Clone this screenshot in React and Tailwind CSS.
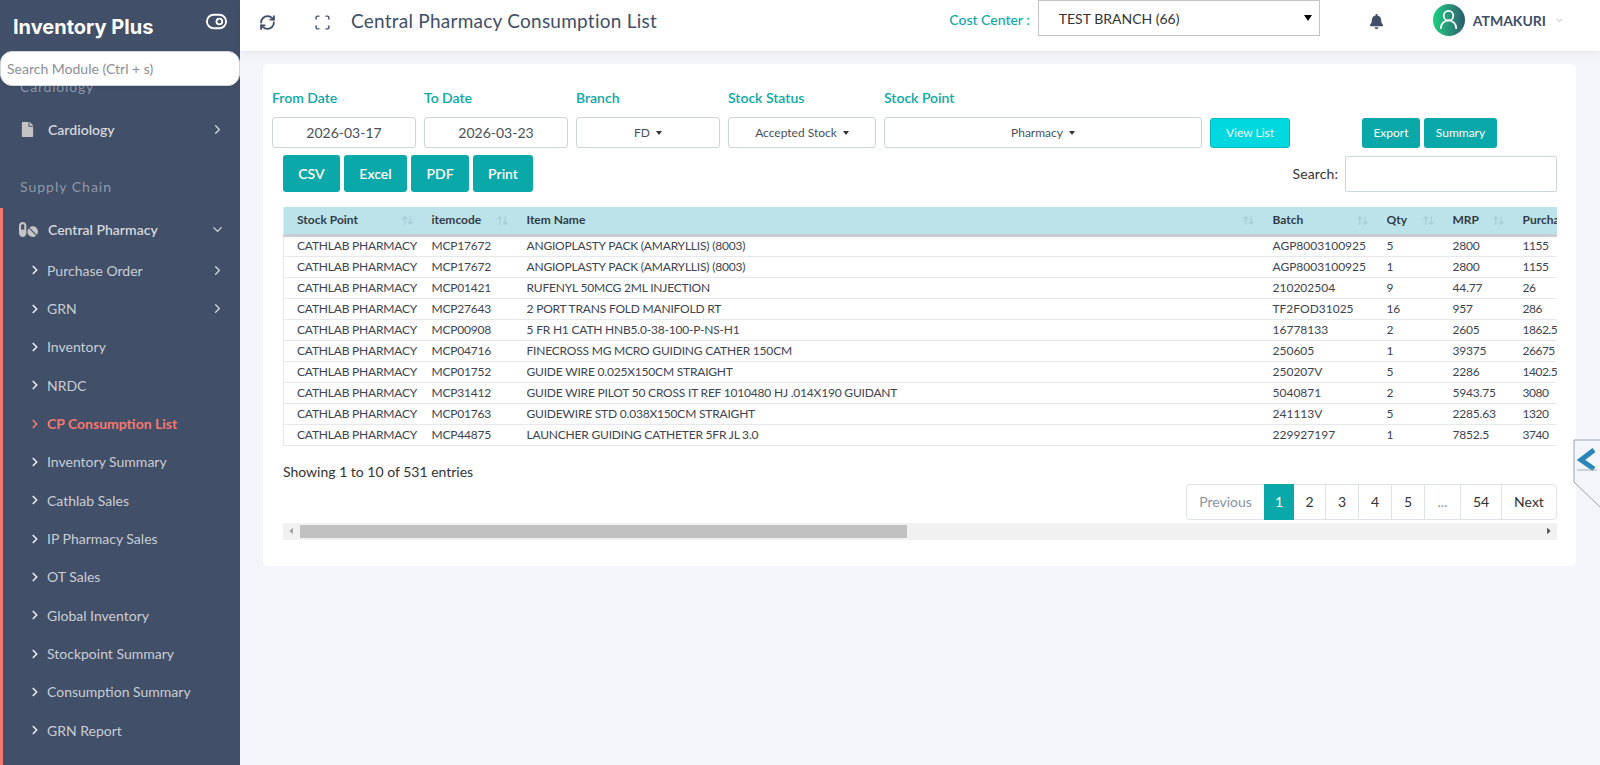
import { ChevronRight, ChevronDown, ToggleRight, UserRound, RefreshCw, Scan } from "lucide-react";
import { FaFile, FaPills, FaBell, FaCaretLeft, FaCaretRight } from "react-icons/fa";
import { TbArrowsSort } from "react-icons/tb";

const subMenu = [
  { name: "Purchase Order", arrow: true },
  { name: "GRN", arrow: true },
  { name: "Inventory" },
  { name: "NRDC" },
  { name: "CP Consumption List", active: true },
  { name: "Inventory Summary" },
  { name: "Cathlab Sales" },
  { name: "IP Pharmacy Sales" },
  { name: "OT Sales" },
  { name: "Global Inventory" },
  { name: "Stockpoint Summary" },
  { name: "Consumption Summary" },
  { name: "GRN Report" },
];

const rows = [
  ["MCP17672", "ANGIOPLASTY PACK (AMARYLLIS) (8003)", "AGP8003100925", "5", "2800", "1155"],
  ["MCP17672", "ANGIOPLASTY PACK (AMARYLLIS) (8003)", "AGP8003100925", "1", "2800", "1155"],
  ["MCP01421", "RUFENYL 50MCG 2ML INJECTION", "210202504", "9", "44.77", "26"],
  ["MCP27643", "2 PORT TRANS FOLD MANIFOLD RT", "TF2FOD31025", "16", "957", "286"],
  ["MCP00908", "5 FR H1 CATH HNB5.0-38-100-P-NS-H1", "16778133", "2", "2605", "1862.58"],
  ["MCP04716", "FINECROSS MG MCRO GUIDING CATHER 150CM", "250605", "1", "39375", "26675"],
  ["MCP01752", "GUIDE WIRE 0.025X150CM STRAIGHT", "250207V", "5", "2286", "1402.5"],
  ["MCP31412", "GUIDE WIRE PILOT 50 CROSS IT REF 1010480 HJ .014X190 GUIDANT", "5040871", "2", "5943.75", "3080"],
  ["MCP01763", "GUIDEWIRE STD 0.038X150CM STRAIGHT", "241113V", "5", "2285.63", "1320"],
  ["MCP44875", "LAUNCHER GUIDING CATHETER 5FR JL 3.0", "229927197", "1", "7852.5", "3740"],
];

const columns = [
  { name: "Stock Point", w: "w-[135px]" },
  { name: "itemcode", w: "w-[95px]" },
  { name: "Item Name", w: "w-[746px]" },
  { name: "Batch", w: "w-[114px]" },
  { name: "Qty", w: "w-[66px]" },
  { name: "MRP", w: "w-[70px]" },
  { name: "Purchase Rate", w: "w-[120px]" },
];

const pages = [
  { t: "2", w: "w-[32px]" },
  { t: "3", w: "w-[33px]" },
  { t: "4", w: "w-[33px]" },
  { t: "5", w: "w-[33px]" },
  { t: "...", w: "w-[36px]", muted: true },
  { t: "54", w: "w-[41px]" },
];

function Sidebar() {
  return (
    <aside className="w-[240px] h-screen shrink-0 bg-[#414f68] overflow-hidden relative">
      <div className="h-[51px] flex items-start justify-between pl-[13px] pr-[12px] pt-[12px]">
        <span className="text-white text-[20px] leading-[30px] font-bold font-['Inter',sans-serif]">Inventory Plus</span>
        <ToggleRight className="text-white w-[23px] h-[23px] -mt-[2px]" strokeWidth={2} />
      </div>
      <div className="h-[35px] relative z-10 bg-white rounded-xl border border-gray-300 flex items-center pl-[6px] text-[14px] text-[#8a8f98] shadow-sm">
        Search Module (Ctrl + s)
      </div>
      <div className="h-[1px] relative">
        <div className="absolute left-[20px] -top-[9px] text-[14px] leading-[20px] text-[#8f98a8] tracking-[0.8px]">Cardiology</div>
      </div>
      <div className="h-[86px] flex items-center justify-between pl-[20px] pr-[15px] -mt-[1px]">
        <div className="flex items-center gap-[13px]">
          <FaFile className="text-[#c4c4c4] text-[15px]" />
          <span className="text-[14px] font-semibold text-[#d5d8dd]">Cardiology</span>
        </div>
        <ChevronRight className="w-[15px] h-[15px] text-[#d5d8dd]" />
      </div>
      <div className="text-[14px] text-[#8f98a8] tracking-[1px] pl-[20px] mt-[3px] h-[24px] leading-[24px]">Supply Chain</div>
      <div className="border-l-[3px] border-[#f4786f] mt-[9px] h-[600px]">
        <div className="h-[43px] flex items-center justify-between pl-[16px] pr-[15px]">
          <div className="flex items-center gap-[10px]">
            <FaPills className="text-[#c4c4c4] text-[19px]" />
            <span className="text-[14px] font-semibold text-[#d5d8dd]">Central Pharmacy</span>
          </div>
          <ChevronDown className="w-[15px] h-[15px] text-[#d5d8dd]" />
        </div>
        <ul>
          {subMenu.map((item) => (
            <li key={item.name} className="h-[38.35px] flex items-center justify-between pl-[25px] pr-[15px]">
              <div className="flex items-center gap-[5px]">
                <ChevronRight className={`w-[14px] h-[14px] ${item.active ? "text-[#f4786f]" : "text-[#e5e7eb]"}`} strokeWidth={3} />
                <span className={`text-[14px] ${item.active ? "font-bold text-[#f4786f]" : "text-[#c9cdd4]"}`}>{item.name}</span>
              </div>
              {item.arrow && <ChevronRight className="w-[15px] h-[15px] text-[#d5d8dd]" />}
            </li>
          ))}
        </ul>
      </div>
    </aside>
  );
}

function Header() {
  return (
    <header className="h-[51px] bg-white shadow-[0_2px_8px_rgba(0,0,0,0.06)] flex items-center relative z-10">
      <RefreshCw className="w-[17px] h-[17px] text-[#414f68] ml-[19px] -mt-[7px]" strokeWidth={2.6} />
      <Scan className="w-[17px] h-[17px] text-[#414f68] ml-[38px] -mt-[7px]" strokeWidth={2} />
      <h1 className="text-[19px] text-[#414f68] ml-[20px] -mt-[9px] tracking-[0.25px]">Central Pharmacy Consumption List</h1>
      <span className="ml-auto text-[14px] font-medium text-[#0aa8a8] -mt-[12px]">Cost Center :</span>
      <div className="w-[282px] h-[36px] self-start ml-[8px] border border-[#c4c4c4] flex items-center justify-between pl-[20px] pr-[6px] text-[14px] text-[#333]">
        TEST BRANCH (66)
        <span className="w-0 h-0 border-x-[4px] border-x-transparent border-t-[6px] border-t-black mr-[1px]"></span>
      </div>
      <FaBell className="text-[#414f68] text-[15px] ml-[49px] -mt-[8px]" />
      <div className="w-[32px] h-[32px] rounded-full bg-gradient-to-r from-[#12d27f] to-[#2b5b6b] flex items-center justify-center ml-[49px] -mt-[12px]">
        <UserRound className="w-[23px] h-[23px] text-white" strokeWidth={1.8} />
      </div>
      <span className="ml-[8px] text-[14px] font-bold text-[#414f68] -mt-[10px]">ATMAKURI</span>
      <ChevronDown className="w-[9px] h-[9px] text-[#9aa1ad] ml-[9px] mr-[36px] -mt-[10px]" />
    </header>
  );
}

function Field({ label, width, children }) {
  return (
    <div className={`${width} shrink-0`}>
      <div className="h-[19px] text-[14px] leading-[19px] font-semibold text-[#0aa8a8]">{label}</div>
      <div className="mt-[10px] h-[31px] bg-white border border-[#ced4da] rounded-[3px] flex items-center justify-center text-[#495057]">
        {children}
      </div>
    </div>
  );
}

function Caret() {
  return <span className="inline-block ml-[6px] w-0 h-0 align-middle border-x-[3.5px] border-x-transparent border-t-[4px] border-t-[#333]"></span>;
}

function Filters() {
  return (
    <div className="flex gap-[8px] items-end">
      <Field label="From Date" width="w-[144px]"><span className="text-[14px]">2026-03-17</span></Field>
      <Field label="To Date" width="w-[144px]"><span className="text-[14px]">2026-03-23</span></Field>
      <Field label="Branch" width="w-[144px]"><span className="text-[12px]">FD<Caret /></span></Field>
      <Field label="Stock Status" width="w-[148px]"><span className="text-[12px]">Accepted Stock<Caret /></span></Field>
      <Field label="Stock Point" width="w-[318px]"><span className="text-[12px]">Pharmacy<Caret /></span></Field>
      <button className="w-[80px] h-[30px] bg-[#00d8e0] border border-[#00b8c0] rounded-[3px] text-white text-[12px]">View List</button>
      <button className="w-[58px] h-[30px] ml-[64px] bg-[#0aa8a8] rounded-[3px] text-white text-[12px]">Export</button>
      <button className="w-[73px] h-[30px] -ml-[4px] bg-[#0aa8a8] rounded-[3px] text-white text-[12px]">Summary</button>
    </div>
  );
}

function DataTable() {
  return (
    <div className="overflow-hidden mt-[15px]">
      <table className="table-fixed border-collapse w-[1346px] text-[12px] text-[#3d4450] border-l border-[#e6e8ec]">
        <thead>
          <tr className="bg-[#bde3ea] h-[28px] border-b-[3px] border-[#c9ced4]">
            {columns.map((col) => (
              <th key={col.name} className={`${col.w} pl-[13px] pr-[5px] text-left font-bold text-[#333b47]`}>
                <div className="flex items-center justify-between whitespace-nowrap overflow-hidden">
                  {col.name}
                  <TbArrowsSort className="text-[#a4ccd5] text-[13px] shrink-0" />
                </div>
              </th>
            ))}
          </tr>
        </thead>
        <tbody>
          {rows.map((row, i) => (
            <tr key={i} className="h-[21px] border-b border-[#e6e8ec]">
              <td className="pl-[13px] whitespace-nowrap tracking-[-0.2px]">CATHLAB PHARMACY</td>
              {row.map((cell, j) => (
                <td key={j} className={`pl-[13px] whitespace-nowrap ${j === 2 ? "" : j === 5 ? "tracking-[-0.5px]" : "tracking-[-0.2px]"}`}>{cell}</td>
              ))}
            </tr>
          ))}
        </tbody>
      </table>
    </div>
  );
}

function Pagination() {
  return (
    <div className="flex justify-end mt-[2px]">
      <div className="flex h-[36px] border border-[#dee2e6] rounded-[4px] text-[14px] text-[#333] items-stretch">
        <span className="w-[77px] flex items-center justify-center text-[#8a94a0]">Previous</span>
        <span className="w-[30px] flex items-center justify-center bg-[#0aa8a8] text-white -my-[1px]">1</span>
        {pages.map((p) => (
          <span key={p.t} className={`${p.w} flex items-center justify-center border-r border-[#dee2e6] ${p.muted ? "text-[#8a94a0]" : ""}`}>{p.t}</span>
        ))}
        <span className="w-[54px] flex items-center justify-center">Next</span>
      </div>
    </div>
  );
}

function ScrollBar() {
  return (
    <div className="mt-[3px] h-[17px] bg-[#f1f1f1] flex items-center">
      <FaCaretLeft className="text-[#a0a0a0] text-[10px] ml-[3px] shrink-0" />
      <div className="w-[607px] h-[13px] bg-[#c1c1c1] ml-[4px]"></div>
      <FaCaretRight className="text-[#505050] text-[10px] ml-auto mr-[3px] shrink-0" />
    </div>
  );
}

function CollapseHandle() {
  return (
    <svg className="absolute right-0 top-[439px]" width="27" height="70" viewBox="0 0 27 70">
      <path d="M27 1 H1 V43 L27 68" fill="#f4f5fa" stroke="#9aa1ad" strokeWidth="1" />
      <path d="M21 11 L8 21 L21 30" fill="none" stroke="#2a86b8" strokeWidth="5" />
      <path d="M4 31 H24" stroke="#a9b0b8" strokeWidth="1" />
    </svg>
  );
}

export default function App() {
  return (
    <div className="flex h-screen overflow-hidden bg-[#f4f5fa] font-['Lato',sans-serif] relative">
      <Sidebar />
      <main className="flex-1 min-w-0">
        <Header />
        <div className="pl-[23px] pr-[24px] pt-[13px]">
          <section className="relative bg-white rounded-[5px] h-[502px] pl-[9px] pr-[19px] pt-[24px]">
            <Filters />
            <div className="flex items-start mt-[7px] pl-[11px] h-[37px]">
              <div className="flex gap-[4px]">
                {["CSV", "Excel", "PDF", "Print"].map((label, i) => (
                  <button key={label} className={`${["w-[57px]", "w-[63px]", "w-[58px]", "w-[60px]"][i]} h-[37px] bg-[#0aa8a8] rounded-[3px] text-white text-[14px] font-semibold`}>{label}</button>
                ))}
              </div>
              <label className="ml-auto flex items-center gap-[7px] text-[14px] text-[#333] tracking-[0.1px]">
                Search:
                <input className="w-[212px] h-[36px] mt-[1px] border border-[#ced4da] rounded-[2px] bg-white" />
              </label>
            </div>
            <div className="pl-[11px]">
              <DataTable />
              <div className="mt-[16px] text-[14px] leading-[20px] text-[#333]">Showing 1 to 10 of 531 entries</div>
              <Pagination />
              <ScrollBar />
            </div>
          </section>
        </div>
      </main>
      <CollapseHandle />
    </div>
  );
}
